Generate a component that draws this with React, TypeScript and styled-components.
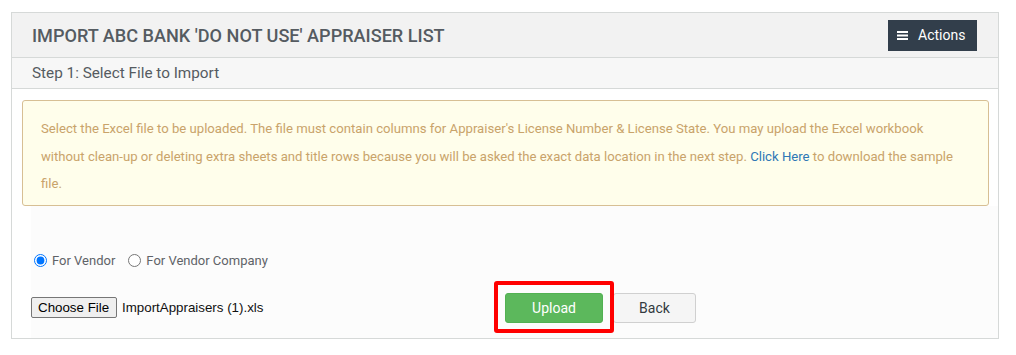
import React from "react";
import styled, { createGlobalStyle } from "styled-components";

const GlobalStyle = createGlobalStyle`
  html, body { margin: 0; padding: 0; background: #ffffff; }
  body { font-family: Roboto, "Liberation Sans", Arial, sans-serif; }
  * { box-sizing: border-box; }
`;

const Page = styled.div`
  padding: 12px 0 0 11px;
`;

const Panel = styled.section`
  width: 988px;
  border: 1px solid #d6d9d8;
  background: #ffffff;
`;

const Header = styled.header`
  height: 45px;
  display: flex;
  align-items: center;
  justify-content: space-between;
  padding: 0 21px 0 20px;
  background: #f2f2f2;
  border-bottom: 1px solid #d6d9d8;
`;

const Title = styled.h1`
  margin: 0;
  font-size: 18.1px;
  font-weight: 500;
  color: #555b61;
  letter-spacing: 0;
`;

const ActionsButton = styled.button`
  display: flex;
  align-items: center;
  gap: 10px;
  height: 31px;
  width: 89px;
  padding: 0 0 0 9px;
  border: none;
  background: #323e4b;
  color: #ffffff;
  font-family: Roboto, sans-serif;
  font-size: 14px;
  cursor: pointer;
`;

const StepBar = styled.div`
  height: 31px;
  display: flex;
  align-items: center;
  padding-left: 20px;
  background: #f7f7f7;
  border-bottom: 1px solid #d6d9d8;
  font-size: 15.3px;
  color: #555b61;
`;

const Body = styled.div`
  padding: 11px 9px 0 10px;
`;

const Alert = styled.div`
  border: 1px solid #d7bf94;
  border-radius: 3px;
  background: #fffeeb;
  padding: 14px 18px 7px;
  color: #c9a36a;
  font-size: 13.15px;
  line-height: 27.5px;
`;

const Link = styled.a`
  color: #2f78b5;
  text-decoration: none;
`;

const FormArea = styled.div`
  margin: 0 -9px 0 9px;
  background: #fcfcfc;
  padding: 47px 0 15px 0;
`;

const RadioRow = styled.div`
  display: flex;
  align-items: center;
  gap: 10px;
  color: #5f6368;
  font-size: 13px;
`;

const RadioLabel = styled.label`
  display: flex;
  align-items: center;
  gap: 5px;
`;

const Radio = styled.input`
  margin: 0 0 0 3px;
  width: 13px;
  height: 13px;
`;

const Grid = styled.div`
  display: grid;
  grid-template-columns: 474px 1fr;
  align-items: center;
  margin-top: 25px;
`;

const FilePicker = styled.div`
  display: flex;
  align-items: center;
  gap: 5px;
  font-family: "Liberation Sans", Arial, sans-serif;
  font-size: 13.33px;
  color: #111;
`;

const ChooseButton = styled.span`
  display: inline-flex;
  align-items: center;
  height: 21px;
  padding: 0 6px;
  min-width: 86px;
  border: 1px solid #767676;
  border-radius: 2px;
  background: #efefef;
  color: #000;
`;

const ButtonRow = styled.div`
  display: flex;
  align-items: center;
  gap: 10px;
`;

const Highlight = styled.div`
  position: relative;
  display: flex;
`;

const HighlightBox = styled.span`
  position: absolute;
  top: -12px;
  bottom: -10px;
  left: -11px;
  right: -11px;
  border: 4px solid #ff0000;
  border-radius: 3px;
  pointer-events: none;
  z-index: 2;
`;

const Btn = styled.button<{ $variant: "success" | "default"; $w: number }>`
  height: 30px;
  width: ${(p) => p.$w}px;
  border-radius: 3px;
  font-family: Roboto, sans-serif;
  font-size: 14px;
  cursor: pointer;
  border: 1px solid ${(p) => (p.$variant === "success" ? "#52b152" : "#d0d0d0")};
  background: ${(p) => (p.$variant === "success" ? "#5cb85c" : "#f5f5f5")};
  color: ${(p) => (p.$variant === "success" ? "#ffffff" : "#333a40")};
`;

const MenuIcon = () => (
  <svg width="11" height="9" viewBox="0 0 11 9" aria-hidden="true">
    <rect x="0" y="0" width="11" height="2" fill="#fff" />
    <rect x="0" y="3.5" width="11" height="2" fill="#fff" />
    <rect x="0" y="7" width="11" height="2" fill="#fff" />
  </svg>
);

export default function App() {
  return (
    <>
      <GlobalStyle />
      <Page>
        <Panel>
          <Header>
            <Title>IMPORT ABC BANK 'DO NOT USE' APPRAISER LIST</Title>
            <ActionsButton>
              <MenuIcon />
              Actions
            </ActionsButton>
          </Header>
          <StepBar>Step 1: Select File to Import</StepBar>
          <Body>
            <Alert>
              Select the Excel file to be uploaded. The file must contain columns for Appraiser's License Number &amp;
              License State. You may upload the Excel workbook without clean-up or deleting extra sheets and title rows
              because you will be asked the exact data location in the next step. <Link href="#">Click Here</Link> to
              download the sample file.
            </Alert>
            <FormArea>
              <RadioRow>
                <RadioLabel>
                  <Radio type="radio" name="target" defaultChecked />
                  For Vendor
                </RadioLabel>
                <RadioLabel>
                  <Radio type="radio" name="target" />
                  For Vendor Company
                </RadioLabel>
              </RadioRow>
              <Grid>
                <FilePicker>
                  <ChooseButton>Choose File</ChooseButton>
                  <span>ImportAppraisers (1).xls</span>
                </FilePicker>
                <ButtonRow>
                  <Highlight>
                    <Btn $variant="success" $w={98}>Upload</Btn>
                    <HighlightBox />
                  </Highlight>
                  <Btn $variant="default" $w={83}>Back</Btn>
                </ButtonRow>
              </Grid>
            </FormArea>
          </Body>
        </Panel>
      </Page>
    </>
  );
}
